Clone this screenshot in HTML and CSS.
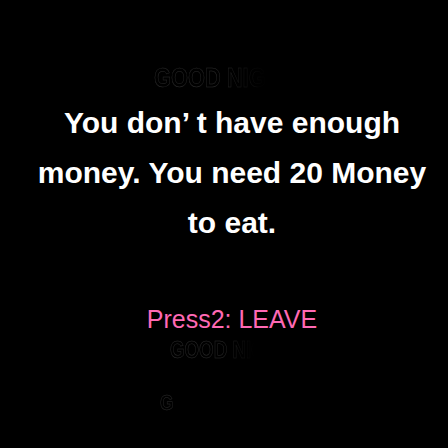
FILE: index.html
```html
<!DOCTYPE html>
<html>
<head>
<meta charset="utf-8">
<link rel="stylesheet" href="styles.css">
</head>
<body>
<div class="screen">
  <div class="ghosts" aria-hidden="true">
    <span class="ghost g1">GOOD NIGHT</span>
    <span class="ghost g5">GOOD NIGHT</span>
    <span class="ghost g6">G</span>
  </div>
  <div class="content">
    <p class="message">You don’ t have enough<br>money. You need 20 Money<br>to eat.</p>
    <p class="option">Press2: LEAVE</p>
  </div>
</div>
</body>
</html>
```
FILE: styles.css
```css
html, body {
  margin: 0;
  padding: 0;
  background: #000;
}
.screen {
  position: relative;
  width: 448px;
  height: 448px;
  background: #000;
  overflow: hidden;
  font-family: "Liberation Sans", Arial, sans-serif;
}
.ghosts {
  position: absolute;
  inset: 0;
}
.ghost {
  position: absolute;
  font-weight: bold;
  color: transparent;
  -webkit-text-stroke: 0.5px rgba(255,255,255,0.16);
  white-space: nowrap;
  transform-origin: left top;
  transform: scaleX(0.78);
  line-height: 1;
}
.g1 { left: 154px; top: 64px; font-size: 28px; -webkit-mask-image: linear-gradient(90deg, #000 50%, transparent 80%); mask-image: linear-gradient(90deg, #000 50%, transparent 80%); }
.g5 { left: 170px; top: 338px; font-size: 24px; -webkit-mask-image: linear-gradient(90deg, #000 45%, transparent 70%); mask-image: linear-gradient(90deg, #000 45%, transparent 70%); }
.g6 { left: 160px; top: 392px; font-size: 22px; }
.content {
  position: relative;
  display: flex;
  flex-direction: column;
  align-items: center;
  padding: 98px 0 0 16px;
}
.message {
  margin: 0;
  color: #fff;
  font-weight: bold;
  font-size: 30px;
  line-height: 50px;
  text-align: center;
  white-space: nowrap;
}
.option {
  margin: 56px 0 0 0;
  color: #ff69b4;
  font-size: 25px;
  line-height: 30px;
  white-space: nowrap;
}
```
